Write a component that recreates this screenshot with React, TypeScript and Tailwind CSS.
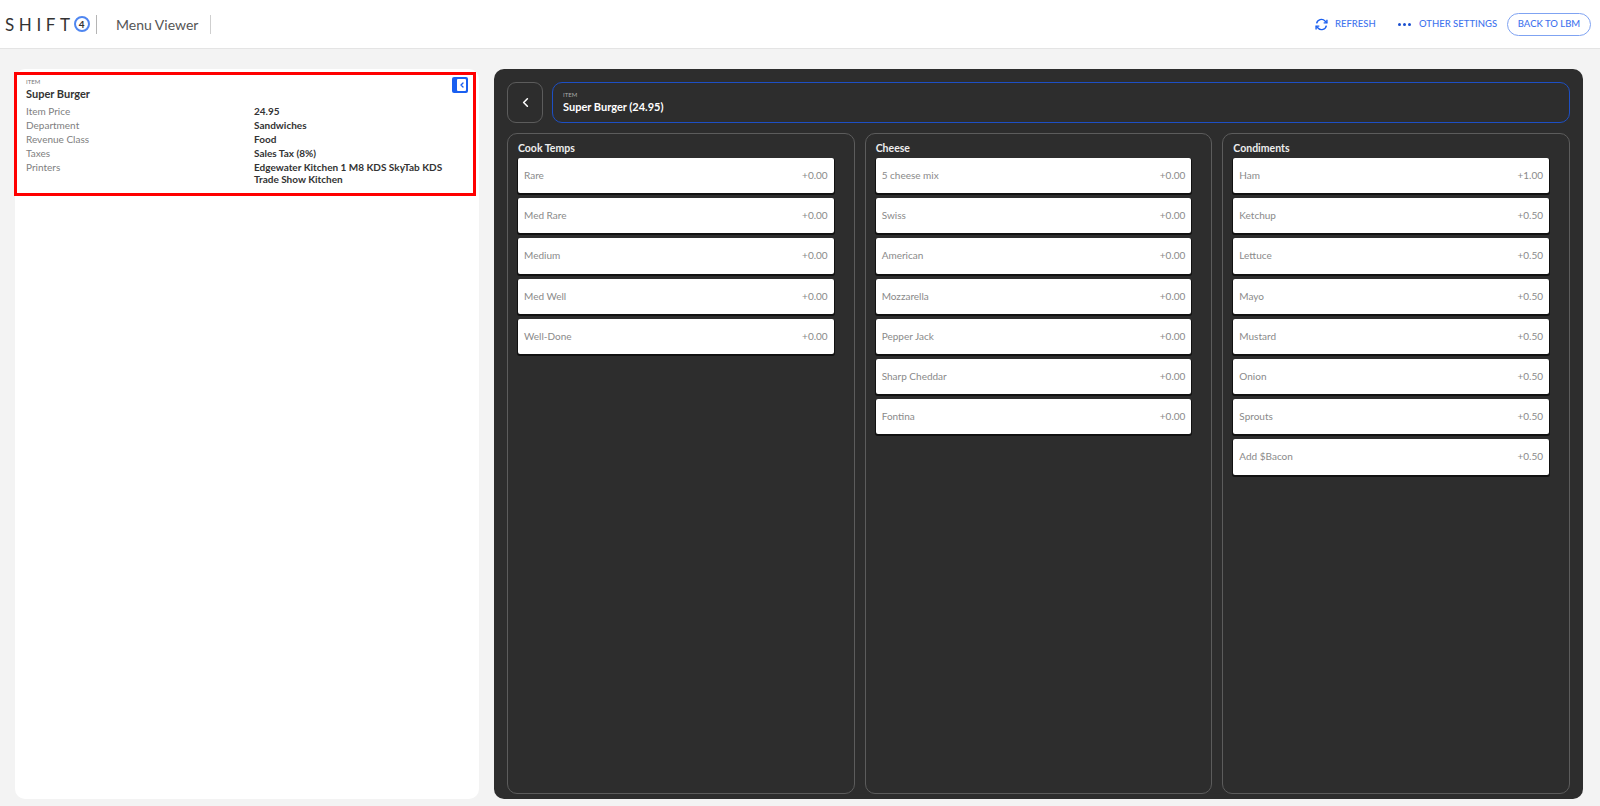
import { ChevronLeft } from "lucide-react";

const font = { fontFamily: 'Lato, "Noto Sans", sans-serif' };

interface Modifier {
    name: string;
    price: string;
}

interface ModifierGroup {
    title: string;
    items: Modifier[];
}

const details = [
    { label: "Item Price", value: "24.95" },
    { label: "Department", value: "Sandwiches" },
    { label: "Revenue Class", value: "Food" },
    { label: "Taxes", value: "Sales Tax (8%)" },
];

const groups: ModifierGroup[] = [
    {
        title: "Cook Temps",
        items: [
            { name: "Rare", price: "+0.00" },
            { name: "Med Rare", price: "+0.00" },
            { name: "Medium", price: "+0.00" },
            { name: "Med Well", price: "+0.00" },
            { name: "Well-Done", price: "+0.00" },
        ],
    },
    {
        title: "Cheese",
        items: [
            { name: "5 cheese mix", price: "+0.00" },
            { name: "Swiss", price: "+0.00" },
            { name: "American", price: "+0.00" },
            { name: "Mozzarella", price: "+0.00" },
            { name: "Pepper Jack", price: "+0.00" },
            { name: "Sharp Cheddar", price: "+0.00" },
            { name: "Fontina", price: "+0.00" },
        ],
    },
    {
        title: "Condiments",
        items: [
            { name: "Ham", price: "+1.00" },
            { name: "Ketchup", price: "+0.50" },
            { name: "Lettuce", price: "+0.50" },
            { name: "Mayo", price: "+0.50" },
            { name: "Mustard", price: "+0.50" },
            { name: "Onion", price: "+0.50" },
            { name: "Sprouts", price: "+0.50" },
            { name: "Add $Bacon", price: "+0.50" },
        ],
    },
];

const Header = () => (
    <header className="h-[49px] bg-white border-b border-[#e4e4e4] flex items-center">
        <div className="flex items-center w-[92px] pl-[5px]">
            <span className="text-[17px] leading-none tracking-[4.6px] text-[#333333] font-normal">
                SHIFT
            </span>
            <span className="w-[16px] h-[16px] -ml-[1px] rounded-full border-2 border-[#4f86f0] flex items-center justify-center text-[10px] font-bold leading-none text-[#333333]">
                4
            </span>
        </div>
        <div className="w-px h-[19px] bg-[#b5b5b5] ml-[4px]" />
        <span className="ml-[19px] w-[94px] text-[14px] text-[#555555] whitespace-nowrap">Menu Viewer</span>
        <div className="w-px h-[19px] bg-[#cfcfcf]" />
        <div className="ml-auto flex items-center pr-[9px]">
            <svg width="13" height="13" viewBox="0 0 24 24" fill="none" stroke="#1a5ff0" strokeWidth="2.6" className="mr-[7px]">
                <path d="M3 10a9 9 0 0 1 15.5-4.5L22 9" />
                <path d="M22 3v6h-6" />
                <path d="M21 14a9 9 0 0 1-15.5 4.5L2 15" />
                <path d="M2 21v-6h6" />
            </svg>
            <span className="text-[9.5px] font-medium text-[#3f74ee] whitespace-nowrap w-[64px]">REFRESH</span>
            <div className="flex gap-[2px] mr-[8px] ml-[-1px]">
                <span className="w-[3px] h-[3px] rounded-full bg-[#1a4fd0]" />
                <span className="w-[3px] h-[3px] rounded-full bg-[#1a4fd0]" />
                <span className="w-[3px] h-[3px] rounded-full bg-[#1a4fd0]" />
            </div>
            <span className="text-[9.5px] font-medium text-[#3f74ee] whitespace-nowrap w-[88px]">OTHER SETTINGS</span>
            <button className="w-[84px] h-[23px] rounded-full border border-[#7fa3f2] text-[9.5px] font-medium text-[#3f74ee] whitespace-nowrap">
                BACK TO LBM
            </button>
        </div>
    </header>
);

const ItemCard = () => (
    <div className="relative -ml-px w-[462px] h-[124px] border-[3px] border-[#ff0000] bg-white pl-[9px] pt-[2px] mt-[3px]">
        <div className="text-[6px] leading-[9px] text-[#777777]">ITEM</div>
        <div className="text-[11px] leading-[15px] font-bold text-[#333333] mb-[4px]">Super Burger</div>
        {details.map((row) => (
            <div key={row.label} className="flex h-[13.8px] items-center text-[10px]">
                <span className="w-[228px] text-[#808080]">{row.label}</span>
                <span className="font-bold text-[#333333]">{row.value}</span>
            </div>
        ))}
        <div className="flex text-[10px] leading-[12px] pt-[1px]">
            <span className="w-[228px] text-[#808080]">Printers</span>
            <div className="font-bold text-[#333333]">
                <div>Edgewater Kitchen 1 M8 KDS SkyTab KDS</div>
                <div>Trade Show Kitchen</div>
            </div>
        </div>
        <button className="absolute top-[2px] right-[5px] w-[16px] h-[16px] rounded-[2px] bg-[#1a5ff0] flex items-center justify-end p-[2px]">
            <span className="w-[9px] h-[12px] bg-white rounded-[1px] flex items-center justify-center">
                <ChevronLeft size={8} strokeWidth={4} color="#1a5ff0" />
            </span>
        </button>
    </div>
);

const ModifierColumn = ({ group }: { group: ModifierGroup }) => (
    <div className="flex-1 rounded-[10px] border-[1.5px] border-[#5c5c5c] pl-[10px] pr-[20px] pt-[4px]">
        <div className="text-[10.5px] leading-[20px] font-bold text-[#eeeeee]">{group.title}</div>
        <div className="flex flex-col gap-[5px]">
            {group.items.map((item) => (
                <div
                    key={item.name}
                    className="h-[35.2px] bg-white rounded-[2px] flex items-center justify-between px-[6px] text-[10px] text-[#8a8a8a] shadow-[0_1px_0_1px_#111111]"
                >
                    <span>{item.name}</span>
                    <span>{item.price}</span>
                </div>
            ))}
        </div>
    </div>
);

export default function App() {
    return (
        <div className="h-[806px] overflow-hidden bg-[#f3f3f3] flex flex-col" style={font}>
            <Header />
            <main className="flex-1 flex gap-[15px] pl-[15px] pr-[17px] pt-[20px] pb-[7px]">
                <div className="w-[464px] rounded-[10px] bg-white">
                    <ItemCard />
                </div>
                <div className="flex-1 rounded-[10px] bg-[#2d2d2d] p-[13px] pb-[5px] flex flex-col">
                    <div className="flex gap-[9px] h-[41px]">
                        <button className="w-[36px] rounded-[9px] border-[1.5px] border-[#5c5c5c] flex items-center justify-center">
                            <ChevronLeft size={15} strokeWidth={2.5} color="#ffffff" />
                        </button>
                        <div className="flex-1 rounded-[10px] border-[1.5px] border-[#1d4fc4] pl-[10px] pt-[7px]">
                            <div className="text-[6px] leading-[9px] text-[#aaaaaa]">ITEM</div>
                            <div className="text-[11px] leading-[15px] font-bold text-white">Super Burger (24.95)</div>
                        </div>
                    </div>
                    <div className="flex-1 flex gap-[10px] mt-[10px]">
                        {groups.map((group) => (
                            <ModifierColumn key={group.title} group={group} />
                        ))}
                    </div>
                </div>
            </main>
        </div>
    );
}
